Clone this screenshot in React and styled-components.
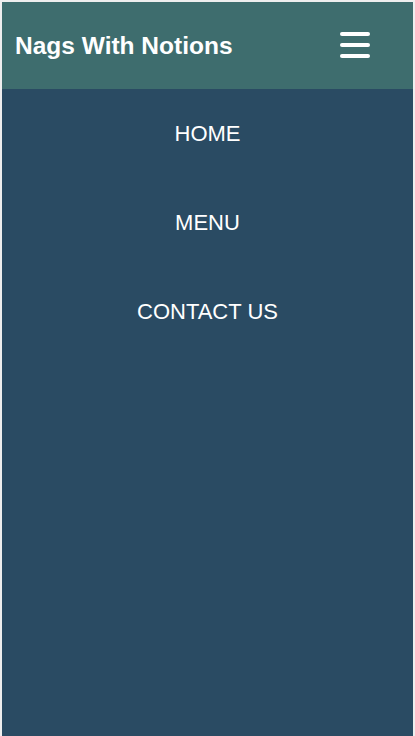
import React from "react";
import styled, { createGlobalStyle } from "styled-components";

const GlobalStyle = createGlobalStyle`
  html, body {
    margin: 0;
    padding: 0;
    background: #eeeeee;
  }
  body {
    padding: 2px 2px 0 2px;
    font-family: "Liberation Sans", Arial, sans-serif;
  }
`;

const links = ["HOME", "MENU", "CONTACT US"];

const App = () => {
  return (
    <>
      <GlobalStyle />
      <Page>
        <Header>
          <Title>Nags With Notions</Title>
          <Burger aria-label="menu">
            <span />
            <span />
            <span />
          </Burger>
        </Header>
        <Nav>
          {links.map((l) => (
            <NavLink key={l} href="#">
              {l}
            </NavLink>
          ))}
        </Nav>
      </Page>
    </>
  );
};

const Page = styled.div`
  min-height: 734px;
  display: flex;
  flex-direction: column;
  background-color: #2a4b63;
`;

const Header = styled.header`
  height: 87px;
  display: flex;
  align-items: center;
  justify-content: space-between;
  padding: 0 43px 0 13px;
  background-color: #3e6d6e;
`;

const Title = styled.h1`
  margin: 0;
  color: #fff;
  font-size: 24.5px;
  font-weight: bold;
  padding-top: 1px;
`;

const Burger = styled.button`
  display: flex;
  flex-direction: column;
  gap: 7px;
  padding: 0;
  background: none;
  border: none;
  margin-bottom: 1px;
  span {
    display: block;
    width: 30px;
    height: 4px;
    border-radius: 2px;
    background: #fff;
  }
`;

const Nav = styled.nav`
  display: flex;
  flex-direction: column;
  align-items: center;
  padding-top: 21px;
`;

const NavLink = styled.a`
  display: block;
  height: 89px;
  line-height: 47px;
  color: #fff;
  font-size: 22px;
  text-decoration: none;
`;

export default App;
